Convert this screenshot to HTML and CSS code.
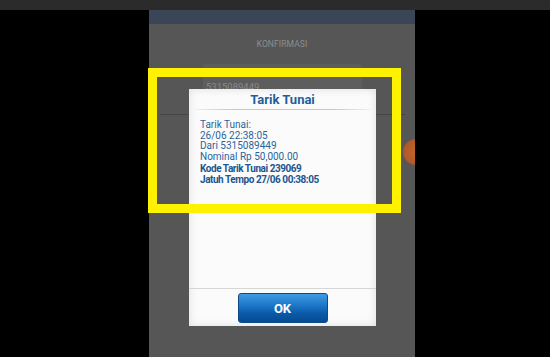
FILE: index.html
```html
<!DOCTYPE html>
<html>
<head>
<meta charset="utf-8">
<link rel="stylesheet" href="styles.css">
</head>
<body>
<div class="topbar"></div>
<div class="stage">
  <div class="screen">
    <div class="appbar"></div>
    <div class="page-title">KONFIRMASI</div>
    <div class="card">
      <div class="card-label"></div>
      <div class="card-value">5315089449</div>
    </div>
    <div class="rule"></div>
    <div class="fab"></div>
    <div class="dialog">
      <div class="dlg-title">Tarik Tunai</div>
      <div class="dlg-divider"></div>
      <div class="dlg-body">
        <div>Tarik Tunai:</div>
        <div>26/06 22:38:05</div>
        <div>Dari 5315089449</div>
        <div>Nominal Rp 50,000.00</div>
        <div class="strong first">Kode Tarik Tunai 239069</div>
        <div class="strong">Jatuh Tempo 27/06 00:38:05</div>
      </div>
      <div class="dlg-footer">
        <button class="ok-btn">OK</button>
      </div>
    </div>
  </div>
</div>
<div class="highlight"></div>
</body>
</html>
```
FILE: styles.css
```css
html, body {
  margin: 0;
  padding: 0;
}
body {
  width: 550px;
  height: 357px;
  overflow: hidden;
  background: #000;
  font-family: Roboto, "Liberation Sans", sans-serif;
  position: relative;
}
.topbar {
  height: 10px;
  background: #2b2b2b;
}
.stage {
  display: flex;
  padding-left: 149px;
}
.screen {
  width: 266px;
  height: 347px;
  background: #565656;
  position: relative;
  overflow: hidden;
  display: flex;
  flex-direction: column;
}
.appbar {
  height: 14px;
  background: #3a4555;
  flex: none;
}
.page-title {
  margin-top: 14px;
  height: 12px;
  line-height: 12px;
  text-align: center;
  font-size: 8.5px;
  color: #8e8e8e;
  letter-spacing: 0.1px;
}
.card {
  margin: 14px 0 0 54px;
  width: 159px;
  height: 40px;
  background: #5d5d5d;
  border-radius: 3px;
  box-sizing: border-box;
  padding: 8px 0 0 3px;
}
.card-label {
  height: 9px;
}
.card-value {
  font-size: 9.5px;
  line-height: 12px;
  color: #8a8a8a;
}
.rule {
  margin: 10px 10px 0 11px;
  height: 1px;
  background: #454545;
}
.fab {
  position: absolute;
  left: 254px;
  top: 129px;
  width: 26px;
  height: 26px;
  border-radius: 50%;
  background: radial-gradient(circle, #c4652c 0%, #b25a2a 60%, #7a4a35 100%);
}
.dialog {
  position: absolute;
  left: 40px;
  top: 79px;
  width: 187px;
  height: 237px;
  background: #fbfbfb;
  box-shadow: inset 0 0 8px rgba(0, 0, 0, 0.12);
  display: flex;
  flex-direction: column;
  box-sizing: border-box;
}
.dlg-title {
  height: 20px;
  line-height: 22px;
  text-align: center;
  font-weight: bold;
  font-size: 13px;
  color: #1e5f9e;
}
.dlg-divider {
  margin: 0 6px;
  height: 1px;
  background: linear-gradient(to right, rgba(200,200,200,0.2), #c9c9c9 20%, #c9c9c9 80%, rgba(200,200,200,0.2));
}
.dlg-body {
  flex: 1;
  padding: 10px 11px 0;
  font-size: 10px;
  line-height: 10.7px;
  color: #2a64a0;
}
.dlg-body .strong {
  font-weight: bold;
  color: #1d5590;
  font-size: 10px;
  line-height: 11.5px;
  letter-spacing: -0.45px;
}
.dlg-body .first {
  margin-top: 0;
}
.dlg-footer {
  height: 38px;
  border-top: 1px solid #d6d6d6;
  display: flex;
  justify-content: center;
  align-items: flex-start;
  padding-top: 4px;
  box-sizing: border-box;
  flex: none;
}
.ok-btn {
  width: 90px;
  height: 30px;
  border: 1px solid #0d4a8a;
  border-radius: 3px;
  background: linear-gradient(to bottom, #3d9be3 0%, #1a72c4 45%, #0b5aa8 70%, #064a8e 100%);
  color: #fff;
  font-family: Roboto, "Liberation Sans", sans-serif;
  font-weight: bold;
  font-size: 13px;
  padding: 0;
}
.highlight {
  position: absolute;
  left: 148px;
  top: 68px;
  width: 253px;
  height: 145px;
  border: 9px solid #fff200;
  box-sizing: border-box;
}
```
